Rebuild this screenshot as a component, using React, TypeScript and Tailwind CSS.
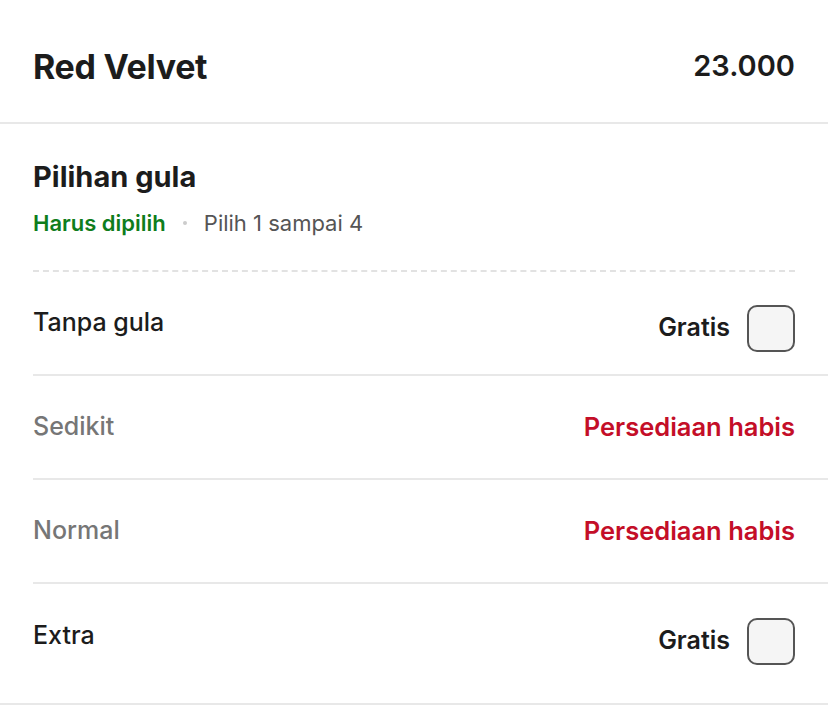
import React from 'react';

type Option = {
  name: string;
  available: boolean;
};

const options: Option[] = [
  { name: 'Tanpa gula', available: true },
  { name: 'Sedikit', available: false },
  { name: 'Normal', available: false },
  { name: 'Extra', available: true },
];

const OptionRow: React.FC<{ option: Option; last: boolean }> = ({ option, last }) => (
  <div className={`ml-[33px] flex h-[104px] items-center justify-between pr-[33px] ${last ? '' : 'border-b-2 border-[#e8e8e8]'}`}>
    <span className={`text-[25px] font-medium ${option.available ? 'text-[#1c1c1c]' : 'text-[#767676]'}`}>
      {option.name}
    </span>
    {option.available ? (
      <div className="flex items-center gap-[17px] pt-[10px]">
        <span className="text-[25px] font-semibold text-[#1c1c1c]">Gratis</span>
        <div className="h-[47px] w-[48px] rounded-[10px] border-2 border-[#555] bg-[#f5f5f5]" />
      </div>
    ) : (
      <span className="text-[25.5px] font-semibold text-[#c40e28]">Persediaan habis</span>
    )}
  </div>
);

export default function App() {
  return (
    <div className="min-h-[722px] bg-white font-['Inter','Noto_Sans',sans-serif] text-[#1c1c1c]">
      <div className="flex h-[122px] items-center justify-between px-[33px] pt-[10px]">
        <h1 className="text-[34px] font-bold tracking-[-0.3px]">Red Velvet</h1>
        <span className="text-[29px] font-semibold">23.000</span>
      </div>
      <div className="h-[2px] bg-[#e8e8e8]" />

      <div className="px-[33px] pt-[36px]">
        <h2 className="text-[29px] leading-[34px] font-bold">Pilihan gula</h2>
        <div className="mt-[16px] flex items-center text-[22px] leading-[26px]">
          <span className="font-semibold text-[#0f7d1c]">Harus dipilih</span>
          <span className="mx-[17px] h-[4px] w-[4px] rounded-full bg-[#cccccc]" />
          <span className="text-[#555555]">Pilih 1 sampai 4</span>
        </div>
        <div className="mt-[34px] border-t-2 border-dashed border-[#e2e2e2]" />
      </div>

      <div>
        {options.map((o, i) => (
          <OptionRow key={o.name} option={o} last={i === options.length - 1} />
        ))}
      </div>
      <div className="mt-[15px] h-[2px] bg-[#e8e8e8]" />
    </div>
  );
}
